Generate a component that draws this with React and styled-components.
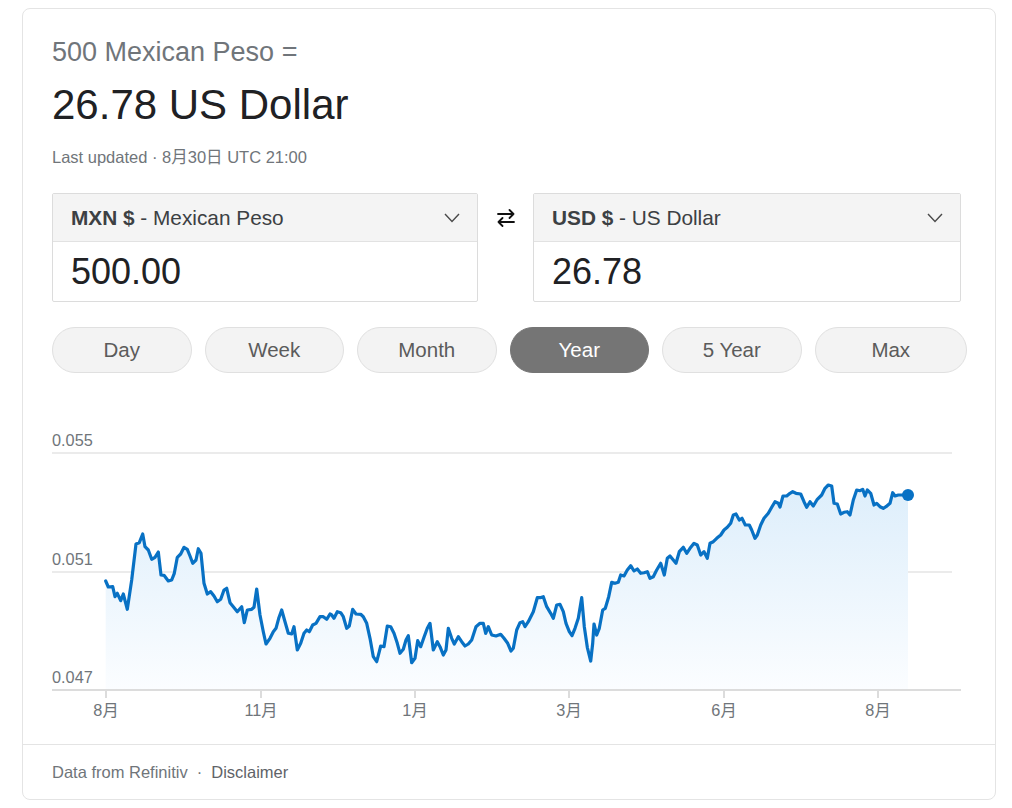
import styled, { createGlobalStyle } from 'styled-components';

const GlobalStyle = createGlobalStyle`
  body {
    margin: 0;
    background: #fff;
    font-family: "Liberation Sans", Arial, "Noto Sans CJK JP", sans-serif;
  }
  * { box-sizing: border-box; }
`;

const Card = styled.div`
  margin: 8px 0 0 22px;
  width: 974px;
  border: 1px solid #e4e4e4;
  border-radius: 8px;
  background: #fff;
`;

const Main = styled.div`
  padding: 27px 28px 0 29px;
`;

const Subtitle = styled.div`
  font-size: 27px;
  line-height: 32px;
  color: #70757a;
`;

const Result = styled.div`
  margin-top: 12px;
  font-size: 42px;
  line-height: 50px;
  color: #202124;
`;

const Updated = styled.div`
  margin-top: 17px;
  font-size: 16.5px;
  line-height: 20px;
  color: #70757a;
`;

const Converter = styled.div`
  margin-top: 26px;
  display: grid;
  grid-template-columns: 426px 55px 428px;
  align-items: start;
`;

const CurrencyBox = styled.div`
  border: 1px solid #dcdcdc;
  border-radius: 2px;
  height: 109px;
  overflow: hidden;
`;

const BoxHeader = styled.div`
  height: 48px;
  background: #f4f4f4;
  border-bottom: 1px solid #e2e2e2;
  display: flex;
  align-items: center;
  justify-content: space-between;
  padding: 0 17px 0 18px;
  font-size: 20.8px;
  color: #3c4043;
`;

const Code = styled.b`
  font-weight: bold;
  color: #3c4043;
`;

const Amount = styled.div`
  height: 59px;
  display: flex;
  align-items: center;
  padding-left: 18px;
  font-size: 36px;
  color: #202124;
`;

const SwapCell = styled.div`
  height: 50px;
  display: flex;
  align-items: center;
  justify-content: center;
`;

const Ranges = styled.div`
  margin-top: 25px;
  display: grid;
  grid-template-columns: repeat(5, 139.5px) 1fr;
  gap: 13px;
`;

const Pill = styled.div`
  height: 46px;
  border-radius: 23px;
  display: flex;
  align-items: center;
  justify-content: center;
  font-size: 20.5px;
  border: 1px solid ${(p) => (p.$active ? '#757575' : '#e0e0e0')};
  background: ${(p) => (p.$active ? '#757575' : '#f3f3f3')};
  color: ${(p) => (p.$active ? '#fff' : '#5b5b5b')};
`;

const ChartSvg = styled.svg`
  display: block;
  font-family: "Liberation Sans", Arial, "Noto Sans CJK JP", sans-serif;
`;

const Footer = styled.div`
  border-top: 1px solid #e4e4e4;
  height: 55px;
  display: flex;
  align-items: center;
  padding-left: 29px;
  font-size: 16.5px;
  color: #70757a;
`;

const Dot = styled.span`
  margin: 0 9px;
`;

const Link = styled.span`
  color: #5f6368;
`;

const Chevron = () => (
  <svg width="16" height="10" viewBox="0 0 16 10">
    <path d="M1 1 L8 8.5 L15 1" fill="none" stroke="#4a4a4a" strokeWidth="1.4" />
  </svg>
);

const SwapIcon = () => (
  <svg width="20" height="20" viewBox="0 0 20 20">
    <g fill="none" stroke="#111" strokeWidth="1.8" strokeLinecap="round" strokeLinejoin="round">
      <path d="M2 6 H17.5 M13.5 2 L17.5 6 L13.5 10" />
      <path d="M18 14 H2.5 M6.5 10 L2.5 14 L6.5 18" />
    </g>
  </svg>
);

const points = [
  [105.7,581],[108.3,587],[112.7,586.7],[115,596.7],[117.3,593.3],[120.7,600.7],[123.3,594],[127.3,609.3],[131.7,580],[136,544],[139.3,542.7],[142.7,534],[145,546.7],[148.3,550],[151.7,559.3],[155,557.3],[158.3,552],[161,575],[164,575.3],[168.3,581],[171.7,580],[174.3,573.3],[177.3,557.3],[180.7,554],[184,547.3],[187.3,549.3],[190,556],[192.7,563.3],[196,560],[198.3,548.7],[201,553.3],[204,583.3],[207.3,594],[210.7,591.7],[214,596],[217.3,601.7],[220.7,599.3],[224,590],[226.7,588.3],[230,602.7],[233.3,606.7],[237.3,611.7],[241.7,606.7],[244.3,622.7],[247.3,610],[251.7,609.3],[254,607.3],[256.7,589],[260,615],[263.3,631.7],[266,644],[270,638.3],[273.3,631.7],[276,628.3],[278.7,618.3],[281.7,610],[285,621.7],[288.3,633.3],[291.7,634],[294,626.7],[297.3,650],[300.7,643.3],[304,633.3],[306.7,630],[309.3,631.7],[312.7,625],[316,623.3],[320,616.7],[323.3,616.7],[326.7,619.3],[330,614],
  [331.7,615],[334,618.3],[337.3,611.7],[340.7,612.7],[343.3,616.7],[346.7,628.3],[349.3,626],[352.7,609.3],[356,614],[360.7,614.3],[363.3,616.7],[366.7,623.3],[370,638.3],[373.3,656.7],[376.7,661.7],[379.3,651.7],[380.7,646],[384,646.7],[387.3,626],[390.7,626.7],[394,633.3],[397.3,643.3],[400,653.3],[403.3,649.3],[406,640],[408.3,635.7],[411.7,662.7],[415,658.3],[417.7,640.7],[420.7,646.7],[424,637.3],[427.3,628.3],[430,623.3],[433.3,650],[437.3,641.7],[440,646.7],[443.3,655],[446,650],[448.3,628.3],[451.7,638.3],[454.3,644],[458.3,636.7],[461.7,641.7],[465,646],[468.3,644],[471.7,640],[476,626.7],[480,623.3],[483.3,623.3],[485.7,633.3],[488.3,626.7],[491.7,635],[496,636],[500.7,634.3],[504,638.3],[507.7,643.3],[511,651],[513.3,648.3],[516.7,630],[520,622.7],[522.7,621.7],[525,626.7],[528.3,621.7],[533.3,611.7],[537.3,597.7],[540,597.7],[543.3,596.7],[546.7,606.7],[550.7,613.3],[553.3,618.3],[556.7,605],[560,604.3],
  [563.3,611.7],[566,623.3],[569.3,631.7],[572,635.7],[575,628.3],[578.3,618.3],[581.7,597.7],[584.3,626.7],[587.3,647.3],[590.7,661],[592.7,643.3],[594,624],[596.7,635],[599.3,628.3],[602.7,610],[605.3,608.3],[608.7,596.7],[611.7,582.3],[615,583.3],[618.3,582.3],[620.7,575],[624,576],[627.3,570],[630.7,565.7],[634,571],[637.3,569],[640.7,573.3],[644,572.7],[647.3,571.7],[650,578.3],[653.3,576.7],[656.7,570],[660.7,563.3],[664.3,575],[667.3,558.3],[670,556],[673.3,560],[676,563.3],[679.3,551.7],[683.3,547.3],[686.7,553.3],[690,548.3],[694,543.3],[697.3,545],[700.7,555],[704,551.7],[707.3,558.3],[710,543.3],[713.3,541.7],[716.7,538.3],[720.7,535],[724,530],[727.3,527.3],[730.7,523.3],[733.3,515],[736,514],[739.3,520],[742,518.3],[745.3,525],[749.3,525],[751.7,530],[755,538.3],[757.3,535],[760.7,525],[764,518.3],[768.3,513.3],[771.7,507.3],[775,501.7],[778.3,503.3],
  [780,507],[783,496],[786.7,496],[790,493.3],[792.7,491.7],[796,493.3],[800.7,494],[804,501.7],[806.7,507.3],[810,501.7],[813.3,506],[817.3,499.3],[821.7,495],[825,488.3],[828.3,485],[831.7,486],[834,503.3],[837.3,504],[840.7,514],[844,512.3],[847.3,511.7],[850,515],[853.3,500],[856.7,490],[860,490.7],[862.7,489.3],[865,496],[867.3,490],[870.7,493.3],[874,505],[876.7,503.3],[880,506.7],[883.3,508.3],[886,506.7],[890,503.3],[892.7,492.7],[895,496],[898.3,495],[901.7,495],[908,495],
];

const linePath = 'M' + points.map((p) => p.join(' ')).join(' L');
const areaPath = linePath + ' L908 689 L105.7 689 Z';

const yLabels = [
  { text: '0.055', y: 453 },
  { text: '0.051', y: 572 },
];

const months = [
  { x: 106, label: '8月' },
  { x: 261, label: '11月' },
  { x: 415, label: '1月' },
  { x: 569, label: '3月' },
  { x: 724, label: '6月' },
  { x: 878, label: '8月' },
];

const Chart = () => (
  <ChartSvg width="915" height="371" viewBox="52 373 915 371">
    <defs>
      <linearGradient id="area" x1="0" y1="0" x2="0" y2="1">
        <stop offset="0" stopColor="#ddeefb" />
        <stop offset="1" stopColor="#fbfdff" />
      </linearGradient>
    </defs>
    {yLabels.map((l) => (
      <g key={l.text}>
        <text x="52" y={l.y - 7} fontSize="16.3" fill="#70757a">{l.text}</text>
        <line x1="52" x2="952" y1={l.y} y2={l.y} stroke="#ebebeb" strokeWidth="2" />
      </g>
    ))}
    <text x="52" y="683" fontSize="16.3" fill="#70757a">0.047</text>
    <path d={areaPath} fill="url(#area)" />
    <line x1="52" x2="961" y1="690" y2="690" stroke="#dcdcdc" strokeWidth="2" />
    {months.map((m, i) => (
      <g key={i}>
        <line x1={m.x} x2={m.x} y1="690" y2="698" stroke="#dcdcdc" strokeWidth="2" />
        <text x={m.x} y="716" fontSize="16.3" fill="#70757a" textAnchor="middle">{m.label}</text>
      </g>
    ))}
    <path d={linePath} fill="none" stroke="#0871c4" strokeWidth="3.2" strokeLinejoin="round" strokeLinecap="round" />
    <circle cx="908" cy="495" r="6" fill="#0871c4" />
  </ChartSvg>
);

const ranges = ['Day', 'Week', 'Month', 'Year', '5 Year', 'Max'];

export default function App() {
  return (
    <>
      <GlobalStyle />
      <Card>
        <Main>
          <Subtitle>500 Mexican Peso =</Subtitle>
          <Result>26.78 US Dollar</Result>
          <Updated>Last updated · 8月30日 UTC 21:00</Updated>
          <Converter>
            <CurrencyBox>
              <BoxHeader>
                <span><Code>MXN $</Code> - Mexican Peso</span>
                <Chevron />
              </BoxHeader>
              <Amount>500.00</Amount>
            </CurrencyBox>
            <SwapCell>
              <SwapIcon />
            </SwapCell>
            <CurrencyBox>
              <BoxHeader>
                <span><Code>USD $</Code> - US Dollar</span>
                <Chevron />
              </BoxHeader>
              <Amount>26.78</Amount>
            </CurrencyBox>
          </Converter>
          <Ranges>
            {ranges.map((r) => (
              <Pill key={r} $active={r === 'Year'}>{r}</Pill>
            ))}
          </Ranges>
          <Chart />
        </Main>
        <Footer>
          Data from Refinitiv<Dot>·</Dot><Link>Disclaimer</Link>
        </Footer>
      </Card>
    </>
  );
}
